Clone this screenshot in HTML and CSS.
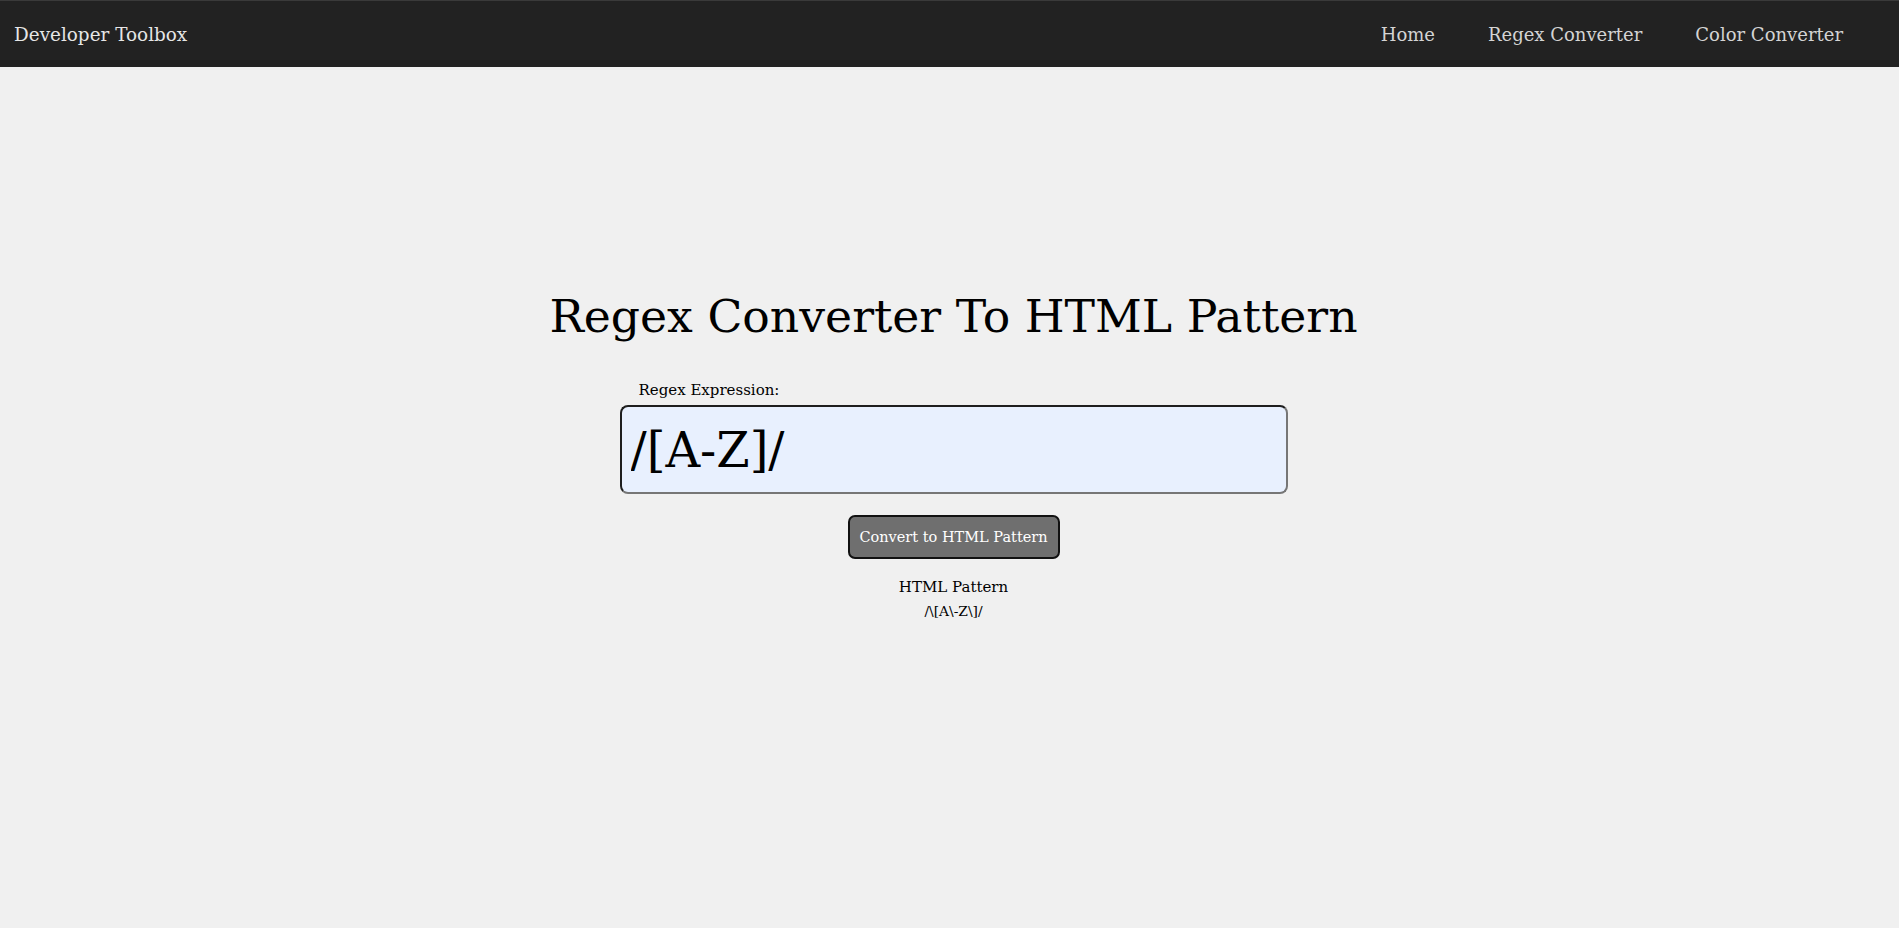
FILE: index.html
```html
<!DOCTYPE html>
<html lang="en">
<head>
<meta charset="utf-8">
<title>Regex Converter</title>
<link rel="stylesheet" href="styles.css">
</head>
<body>
<header class="navbar">
  <a class="brand" href="#">Developer Toolbox</a>
  <nav class="nav-links">
    <a href="#">Home</a>
    <a href="#">Regex Converter</a>
    <a href="#">Color Converter</a>
  </nav>
</header>
<main class="content">
  <h1 class="title">Regex Converter To HTML Pattern</h1>
  <form class="regex-form">
    <label class="field-label" for="regex">Regex Expression:</label>
    <input class="regex-input" id="regex" type="text" value="/[A-Z]/">
    <button class="convert-btn" type="button">Convert to HTML Pattern</button>
  </form>
  <section class="result">
    <h2 class="result-title">HTML Pattern</h2>
    <p class="result-value">/\[A\-Z\]/</p>
  </section>
</main>
</body>
</html>
```
FILE: styles.css
```css
* { box-sizing: border-box; }
body {
  margin: 0;
  background: #f0f0f0;
  font-family: "DejaVu Serif", "Liberation Serif", serif;
  color: #000;
}
.navbar {
  height: 67px;
  background: #222;
  border-top: 1px solid #3a3a3a;
  display: flex;
  align-items: center;
  justify-content: space-between;
  padding: 0 32px 0 14px;
}
.brand {
  color: #e6e6e6;
  text-decoration: none;
  font-size: 18.4px;
}
.nav-links {
  display: flex;
  gap: 53px;
  padding-right: 24px;
}
.nav-links a {
  color: #d4d4d4;
  text-decoration: none;
  font-size: 18px;
}
.content {
  display: flex;
  flex-direction: column;
  align-items: center;
  padding: 0 0 0 8px;
}
.title {
  font-weight: normal;
  font-size: 45.7px;
  margin: 218px 0 0;
  line-height: 64px;
}
.regex-form {
  display: flex;
  flex-direction: column;
  align-items: center;
  margin-top: 31px;
}
.field-label {
  align-self: flex-start;
  font-size: 15px;
  margin-left: 19px;
  line-height: 20px;
}
.regex-input {
  width: 668px;
  height: 89px;
  margin-top: 5px;
  background: #e8f0fe;
  border: 2px solid #1e1e1e;
  border-right-color: #767676;
  border-bottom-color: #767676;
  border-radius: 8px;
  font-family: inherit;
  font-size: 48px;
  padding: 0 9px;
  color: #000;
}
.convert-btn {
  margin-top: 21px;
  width: 212px;
  height: 44px;
  background: #6f6f6f;
  color: #fff;
  border: 2px solid #111;
  border-radius: 7px;
  font-family: inherit;
  font-size: 14.5px;
  padding: 0;
}
.result {
  text-align: center;
  margin-top: 17px;
}
.result-title {
  font-weight: normal;
  font-size: 15px;
  margin: 0;
  line-height: 22px;
}
.result-value {
  font-size: 13.8px;
  margin: 3px 0 0;
  line-height: 20px;
}
```
